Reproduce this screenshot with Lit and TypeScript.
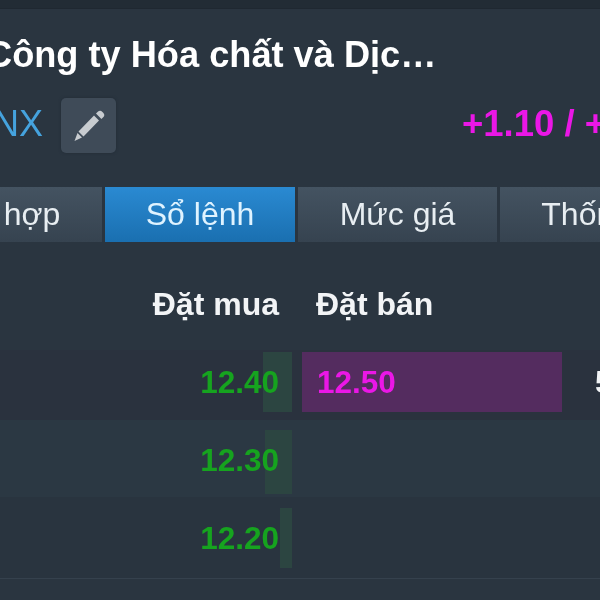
import { LitElement, html, css } from "lit";
import { customElement } from "lit/decorators.js";

@customElement("app-root")
export class AppRoot extends LitElement {
  static styles = css`
    :host { display: block; width: 600px; height: 600px; overflow: hidden; background: #2a3540; font-family: "Liberation Sans", Arial, sans-serif; }
    .page { filter: blur(0.45px); height: 600px; }
    .top { height: 8px; background: #222c35; border-bottom: 1px solid #1f2831; }
    .title { margin: 22px 0 0 -14px; height: 48px; line-height: 48px; font-size: 36.2px; font-weight: 700; color: #fff; white-space: nowrap; }
    .info { display: flex; align-items: center; height: 55px; margin-top: 19px; }
    .code { margin-left: -33px; font-size: 36px; color: #45a3de; width: 94px; flex: none; white-space: nowrap; position: relative; top: -2px; }
    .edit { width: 55px; height: 55px; flex: none; border-radius: 5px; background: #3f4b58; display: flex; align-items: center; justify-content: center; box-shadow: 0 0 3px #222c35; }
    .change { margin-left: 346px; flex: none; font-size: 36.5px; font-weight: 700; color: #ea17e6; white-space: nowrap; position: relative; top: -2px; }
    .tabs { display: flex; margin: 34px 0 0 -40px; height: 55px; gap: 3px; }
    .tab { display: flex; align-items: center; justify-content: center; height: 55px; background: linear-gradient(#445361, #364350); color: #e8eef2; font-size: 32px; white-space: nowrap; flex: none; box-sizing: border-box; }
    .tab.a { width: 142px; padding-left: 2px; }
    .tab.b { width: 190px; background: linear-gradient(#2a8ad2, #1a6fb0); color: #dff3ff; }
    .tab.c { width: 199px; }
    .tab.d { width: 216px; }
    .book { margin-top: 38px; display: grid; grid-template-columns: 279px 1fr; }
    .hd { font-size: 32px; font-weight: 700; color: #f2f4f6; height: 48px; line-height: 48px; white-space: nowrap; }
    .hd.l { text-align: right; }
    .hd.r { padding-left: 37px; }
    .rows { margin-top: 22px; border-bottom: 1px solid #35414d; height: 228px; background: linear-gradient(#2a323e 0 70px, #2b3843 70px 147px, #29343f 147px); }
    .row { display: grid; grid-template-columns: 292px 10px 260px 1fr; height: 78px; }
    .bid { position: relative; }
    .bar { position: absolute; top: 2px; right: 0; height: 60px; background: #2c4541; }
    .row:nth-child(2) .bar { top: 2px; height: 64px; }
    .price { position: relative; display: block; text-align: right; width: 279px; height: 60px; line-height: 60px; margin-top: 2px; font-size: 31.5px; font-weight: 700; color: #16a31f; }
    .ask { height: 60px; margin-top: 2px; }
    .ask.on { background: #542c5f; color: #ea17e6; font-size: 31.5px; font-weight: 700; line-height: 60px; padding-left: 15px; box-sizing: border-box; }
    .vol { height: 60px; margin-top: 2px; line-height: 60px; padding-left: 33px; color: #f2f4f6; font-size: 31.5px; font-weight: 700; white-space: nowrap; }
  `;

  render() {
    const rows = [
      { p: "12.40", w: 29, ask: "12.50", vol: "5" },
      { p: "12.30", w: 27, ask: "", vol: "" },
      { p: "12.20", w: 12, ask: "", vol: "" },
    ];
    return html`
      <div class="page">
      <div class="top"></div>
      <div class="title">Công ty Hóa chất và Dịc…</div>
      <div class="info">
        <div class="code">HNX</div>
        <div class="edit">
          <svg width="36" height="36" viewBox="0 0 36 36"><path fill="#c8ccd0" d="M28 12.5 23 7.5 7.5 23.5l5 5zM25 5.500l1.800-1.700a3.300 3.300 0 0 1 4.600.1l.8.8a3.300 3.300 0 0 1 0 4.600l-1.800 1.800zM6.500 25l4.500 4.500-7.500 3.500z"/></svg>
        </div>
        <div class="change">+1.10 / +9.65%</div>
      </div>
      <div class="tabs">
        <div class="tab a">hợp</div>
        <div class="tab b">Sổ lệnh</div>
        <div class="tab c">Mức giá</div>
        <div class="tab d">Thống kê</div>
      </div>
      <div class="book">
        <div class="hd l">Đặt mua</div>
        <div class="hd r">Đặt bán</div>
      </div>
      <div class="rows">
        ${rows.map(
          (r) => html`<div class="row">
            <div class="bid">
              <div class="bar" style="width:${r.w}px"></div>
              <span class="price">${r.p}</span>
            </div>
            <div></div>
            <div class="ask ${r.ask ? "on" : ""}">${r.ask}</div>
            <div class="vol">${r.vol}</div>
          </div>`
        )}
      </div>
      </div>
    `;
  }
}
